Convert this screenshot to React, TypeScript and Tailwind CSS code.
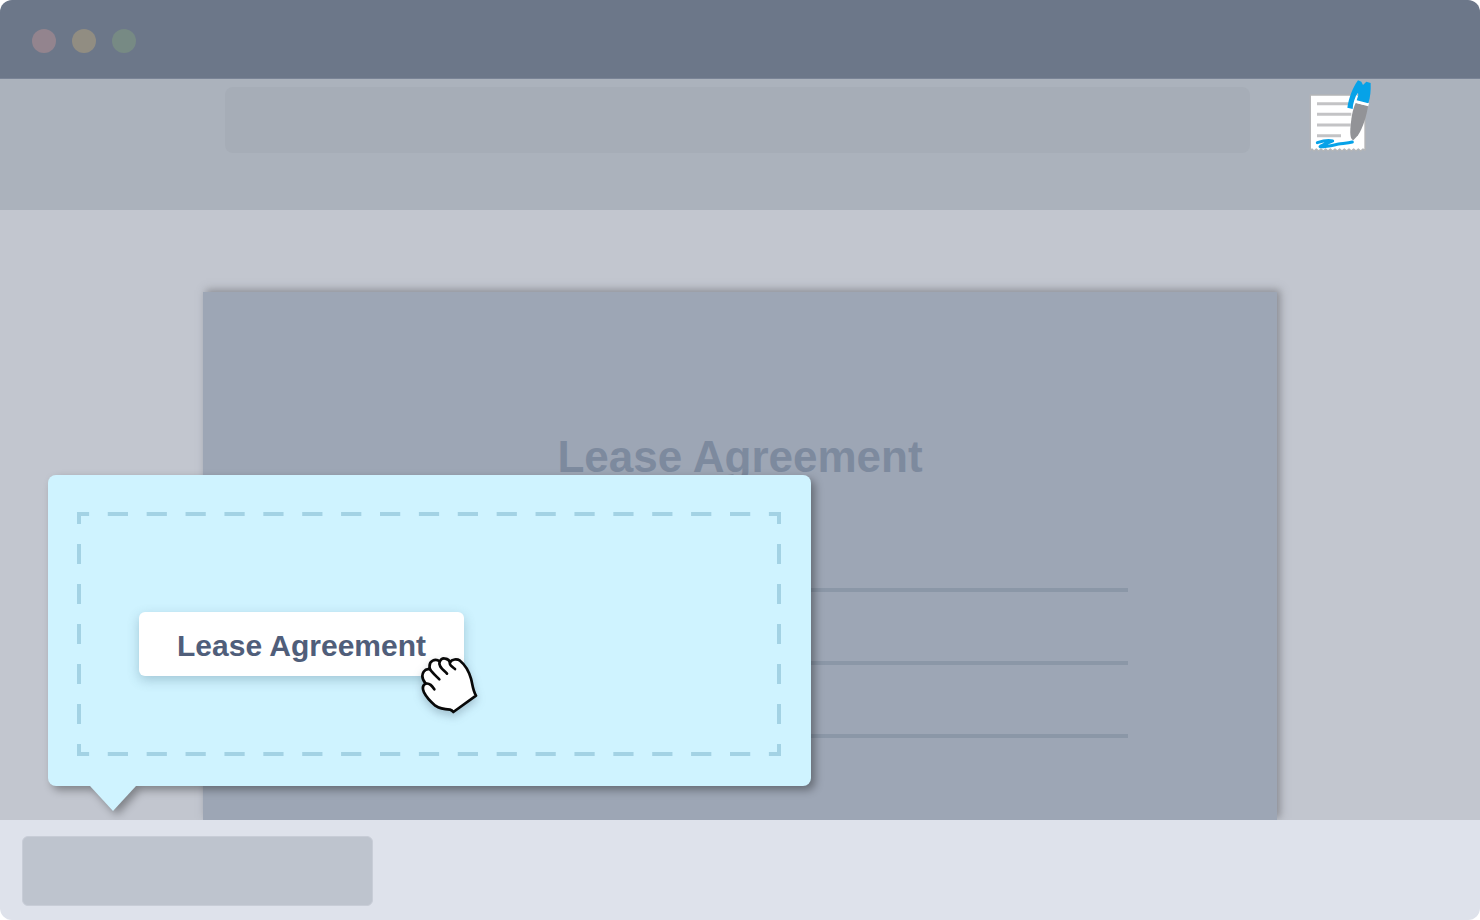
import { ReactNode } from "react";

const WINDOW_DOTS = ["bg-[#93848e]", "bg-[#918d82]", "bg-[#778a84]"];

function TitleBar() {
  return (
    <header className="flex h-[79px] items-center gap-4 border-b border-[#7a8496] bg-[#6c7789] px-8 pt-1">
      {WINDOW_DOTS.map((color) => (
        <span key={color} className={`size-6 rounded-full ${color}`} />
      ))}
    </header>
  );
}

function NoteIcon() {
  return (
    <svg className="h-[72px] w-16" viewBox="54 30 192 216" fill="none" aria-hidden="true">
      <path
        d="M61 75H225V241L219 237L212 243L205 237L198 243L191 237L184 243L177 237L170 243L163 237L156 243L149 237L142 243L135 237L128 243L121 237L114 243L107 237L100 243L93 237L86 243L79 237L72 243L66 237L61 241Z"
        fill="#fff"
        stroke="#b4b5b7"
        strokeWidth="4"
        strokeLinejoin="round"
      />
      <path d="M81 101H178M81 133H184M81 165H182M81 197H153" stroke="#c3c3c5" strokeWidth="9" />
      <path
        d="M82 218C97 213 117 210 128 213C116 219 96 223 90 230C106 231 126 226 146 222C160 220 174 219 187 216"
        stroke="#06a2e8"
        strokeWidth="9"
        strokeLinecap="round"
        strokeLinejoin="round"
      />
      <path d="M197 99L234 108C231 133 219 174 204 196L190 211C182 208 180 195 181 177C183 149 187 120 197 99Z" fill="#929397" />
      <path d="M190 91L236 104" stroke="#fff" strokeWidth="10" />
      <path d="M197 67L203 69L197 92L188 95Z" fill="#fff" />
      <path
        d="M172 113L188 117C189 100 194 81 204 68L205 75L200 91L235 100C241 82 243 61 242 39L229 35L219 45L214 35L204 31C187 55 177 84 172 113Z"
        fill="#06a2e8"
      />
    </svg>
  );
}

function GrabHand() {
  return (
    <svg
      className="absolute -right-[14px] -bottom-[38px] size-[58px] drop-shadow-[0_4px_4px_rgba(60,80,100,0.3)]"
      viewBox="60 48 174 174"
      aria-hidden="true"
    >
      <path
        d="M160 216C157 212 154 210 150 209C130 208 116 204 106 197C93 186 80 173 72 157C67 146 67 136 77 131C66 117 65 104 71 95C76 88 83 86 90 88C87 76 90 66 98 62C105 58 114 60 119 65C123 57 129 54 136 56C143 57 148 61 150 67C156 57 171 56 180 62C195 74 207 95 213 116C218 134 218 151 228 167Z"
        fill="#fff"
        stroke="#080808"
        strokeWidth="8"
        strokeLinejoin="round"
      />
      <path
        d="M77 131C89 128 96 138 103 148M90 88C97 99 107 107 118 118M119 65C113 80 132 90 141 101M150 67C146 75 157 80 165 87"
        fill="none"
        stroke="#080808"
        strokeWidth="8"
        strokeLinecap="round"
      />
    </svg>
  );
}

function Toolbar() {
  return (
    <div className="flex h-[131px] items-start bg-[#abb2bc] pr-[108px] pl-[225px]">
      <input
        type="text"
        aria-label="Address"
        className="mt-2 h-[66px] min-w-0 flex-1 rounded-lg bg-[#a6adb7] px-6 text-2xl outline-none"
      />
      <button type="button" aria-label="Notes" className="mt-px ml-[58px] shrink-0">
        <NoteIcon />
      </button>
    </div>
  );
}

function LeasePaper() {
  return (
    <article className="flex flex-1 flex-col items-center bg-[#9da6b5] px-[149px] pt-[140px] shadow-[3px_-2px_8px_rgba(90,90,95,0.55)]">
      <h1 className="text-[44px] leading-[50px] font-bold text-[#7d8a9e]">Lease Agreement</h1>
      <div className="mt-[106px] flex w-full flex-col gap-[69px]">
        <hr className="h-1 border-0 bg-[#8b97a7]" />
        <hr className="h-1 border-0 bg-[#8b97a7]" />
        <hr className="h-1 border-0 bg-[#8b97a7]" />
      </div>
    </article>
  );
}

function DropZone({ children }: { children: ReactNode }) {
  return (
    <div className="relative flex h-[244px] items-start pt-[100px] pl-[62px]">
      <svg
        className="absolute inset-0 size-full"
        viewBox="0 0 704 244"
        preserveAspectRatio="none"
        fill="none"
        stroke="#a3d2e4"
        strokeWidth="4"
        aria-hidden="true"
      >
        <path d="M2 2H702" pathLength="900" strokeDasharray="26 24" strokeDashoffset="13" />
        <path d="M2 242H702" pathLength="900" strokeDasharray="26 24" strokeDashoffset="13" />
        <path d="M2 2V242" strokeDasharray="20 20" strokeDashoffset="10" />
        <path d="M702 2V242" strokeDasharray="20 20" strokeDashoffset="10" />
        <path d="M0 2H4M700 2H704M0 242H4M700 242H704" />
      </svg>
      {children}
    </div>
  );
}

function DropPopover() {
  return (
    <section className="absolute bottom-[34px] left-12 w-[763px] rounded-lg bg-[#cff3ff] pt-[37px] pr-[30px] pb-[30px] pl-[29px] drop-shadow-[4px_4px_4px_rgba(0,0,0,0.35)]">
      <DropZone>
        <button
          type="button"
          className="relative h-16 cursor-grab rounded-md bg-white px-[38px] pt-1 text-3xl font-bold whitespace-nowrap text-[#505e7a] shadow-[0_4px_12px_rgba(60,100,120,0.3)]"
        >
          Lease Agreement
          <GrabHand />
        </button>
      </DropZone>
      <svg className="absolute top-full left-[42px] h-[25px] w-[46px]" viewBox="0 0 46 25" aria-hidden="true">
        <path d="M0 0H46L23 25Z" fill="#cff3ff" />
      </svg>
    </section>
  );
}

export default function App() {
  return (
    <div className="flex min-h-screen flex-col overflow-hidden rounded-xl font-['Liberation_Sans',Arial,sans-serif]">
      <TitleBar />
      <Toolbar />
      <main className="relative flex flex-1 overflow-hidden bg-[#c2c6cf] px-[203px] pt-[82px]">
        <LeasePaper />
        <DropPopover />
      </main>
      <footer className="flex h-[100px] items-center bg-[#dee2eb] px-[22px]">
        <button
          type="button"
          aria-label="Downloaded file"
          className="mt-0.5 h-[70px] w-[351px] rounded-md border border-[#c8cdd7] bg-[#bec4ce]"
        />
      </footer>
    </div>
  );
}
